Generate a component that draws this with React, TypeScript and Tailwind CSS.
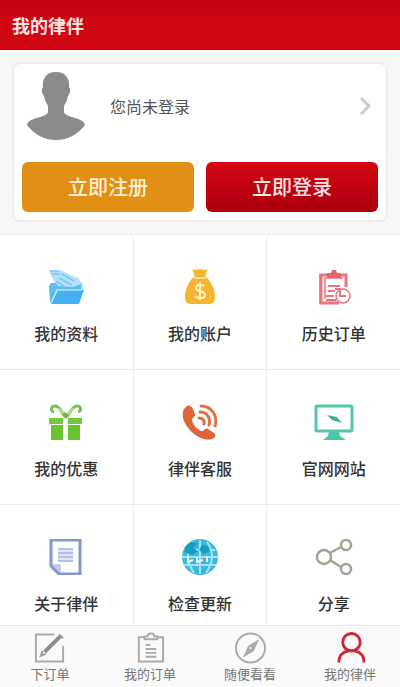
import { useState } from "react";
import type { ReactNode } from "react";

interface MenuItem {
  label: string;
  icon: ReactNode;
}

const menuItems: MenuItem[] = [
  {
    label: "我的资料",
    icon: (
      <svg viewBox="0 0 36 36" className="h-9 w-9" aria-hidden="true">
        <path d="M1 2 13 1l7 4 10 4 5 6v6H2V15l5-1z" fill="#b5e0fa" />
        <path d="M2 2h9M4 5h8M14 5l12 7M11 9l13 7M8 12l8 5" stroke="#79c5f3" strokeWidth="1.5" />
        <path d="M1 17l2-3h5l2 3 15 1 8-3v7H8L4 33H2z" fill="#5cbcf4" />
        <path d="M10 21h26l-5 14H3z" fill="#45b1f3" />
        <path d="M3 34 9 21h25" fill="none" stroke="#b9e4fc" strokeWidth="1.5" />
      </svg>
    ),
  },
  {
    label: "我的账户",
    icon: (
      <svg viewBox="0 0 36 36" className="h-9 w-9" aria-hidden="true">
        <path d="M10 0c3 2 5 0 8 0s5 2 8 0l-3 7c6 4 10 14 10 21 0 5-2 7-6 7H9c-4 0-6-2-6-7C3 21 7 11 13 7z" fill="#f6b52f" />
        <path d="M12 9h12" stroke="#fce1a5" strokeWidth="2" />
        <path d="M22 17c-2-2-8-2-8 2 0 5 9 2 9 7 0 4-7 4-10 1M18 13v18" fill="none" stroke="#fff1cc" strokeWidth="2" />
      </svg>
    ),
  },
  {
    label: "历史订单",
    icon: (
      <svg viewBox="0 0 36 36" className="h-9 w-9" fill="none" stroke="#e87580" aria-hidden="true">
        <path d="M30 18V6H5v28h18" strokeWidth="3" />
        <path d="M4 34V5M9 30V9h18" strokeWidth="1.5" />
        <path d="M11 4h4l1-3h4l1 3h4v5H11z" fill="#e46470" stroke="none" />
        <path d="M12 17h12M12 22h7M10 27h8M10 31h10" strokeWidth="2" />
        <circle cx="27" cy="27" r="7" fill="#fff" strokeWidth="1.5" />
        <path d="M19 20h5v7h6" strokeWidth="2" />
      </svg>
    ),
  },
  {
    label: "我的优惠",
    icon: (
      <svg viewBox="0 0 36 36" className="h-9 w-9" aria-hidden="true">
        <path d="M17 13C14 8 11 2 7 2c-4 0-5 5-1 6M19 13c3-5 6-11 10-11 4 0 5 5 1 6" fill="none" stroke="#7dbe50" strokeWidth="3" />
        <path d="M10 5c4 0 5 5 7 8M26 5c-4 0-5 5-7 8" fill="none" stroke="#b4e58b" strokeWidth="2" />
        <path d="M1 14h14v6H1zM20 14h14v6H20z" fill="#72c83c" />
        <path d="M3 21h12v15H3zM20 21h12v15H20z" fill="#68c52c" />
        <path d="m14 11 3-3 4 3-3 4z" fill="#78ad59" />
      </svg>
    ),
  },
  {
    label: "律伴客服",
    icon: (
      <svg viewBox="0 0 36 36" className="h-9 w-9" aria-hidden="true">
        <path d="M3 4c3-4 6-3 8 1l2 5c1 3-4 4-3 7 2 5 5 8 9 10 3 1 4-4 7-2l6 4c3 2 1 5-2 6C17 39-2 20 1 8c0-2 1-3 2-4z" fill="#de653b" />
        <path d="M17 14c4 0 6 3 5 6M18 8c7 0 11 6 9 13M19 2c11 0 17 10 14 20" fill="none" stroke="#e0703f" strokeWidth="3" strokeLinecap="round" />
      </svg>
    ),
  },
  {
    label: "官网网站",
    icon: (
      <svg viewBox="0 0 40 36" className="h-9 w-10" aria-hidden="true">
        <rect x="2" y="2" width="36" height="25" rx="1" fill="none" stroke="#55c6aa" strokeWidth="3" />
        <path d="M15 28h10l1 4 6 4H9l5-4z" fill="#4bc5a6" />
        <path d="m13 11 10 2 5 6-10-3z" fill="#45ae99" />
      </svg>
    ),
  },
  {
    label: "关于律伴",
    icon: (
      <svg viewBox="0 0 36 36" className="h-9 w-9" aria-hidden="true">
        <path d="M3 1h29v34H11l-8-8z" fill="#fff" stroke="#8296cf" strokeWidth="3" strokeLinejoin="round" />
        <path d="M4 26h8v8z" fill="#c2cdf0" stroke="#a0b0df" />
        <path d="M10 9h15v14H10z" fill="#dfe4f7" />
        <path d="M10 10h15M10 14h15M10 18h15M10 22h15" stroke="#b3bee2" strokeWidth="2" />
      </svg>
    ),
  },
  {
    label: "检查更新",
    icon: (
      <svg viewBox="0 0 38 36" className="h-9 w-[38px]" aria-hidden="true">
        <circle cx="19" cy="18" r="18" fill="#39b9dc" />
        <path d="M3 11h31M1 18h36M3 26h32M19 1v34M12 3C5 13 6 24 13 34M26 3c7 10 6 21-1 31" fill="none" stroke="#a5e3f2" strokeWidth="2" />
        <path d="m4 8 6-5 7 1-5 5 5 3-6 4-8-3zM21 6l6 1 2 5-6 3-5-4z" fill="#189dbf" />
        <path d="M7 17v6l5-2M16 18v5l6-2M26 17v6" fill="none" stroke="#e7fafd" strokeWidth="2" />
      </svg>
    ),
  },
  {
    label: "分享",
    icon: (
      <svg viewBox="0 0 38 36" className="h-9 w-[38px]" fill="none" stroke="#aaa195" strokeWidth="2.5" aria-hidden="true">
        <circle cx="9" cy="18" r="7" />
        <circle cx="31" cy="6" r="5" />
        <circle cx="31" cy="30" r="5" />
        <path d="m15 14 11-6M15 21l11 7" />
      </svg>
    ),
  },
];

const tabs: MenuItem[] = [
  {
    label: "下订单",
    icon: (
      <>
        <path d="M21 2H2v28h28V14" strokeWidth="2" />
        <path d="M27 4 11 20" strokeWidth="4" stroke="#8c8c8c" />
        <path d="m9 19-2 5 5-2M26 2l4 4" strokeWidth="2" stroke="#999" />
      </>
    ),
  },
  {
    label: "我的订单",
    icon: (
      <>
        <path d="M11 5H5v25h25V5h-6" strokeWidth="2" />
        <path d="M11 7V4h3c0-4 7-4 7 0h3v3z" strokeWidth="2" />
        <path d="M12 13h5M12 17h11M12 21h11M12 25h11" strokeWidth="2" />
      </>
    ),
  },
  {
    label: "随便看看",
    icon: (
      <>
        <circle cx="17" cy="16" r="15" strokeWidth="2" />
        <path d="m25 8-5 11-10 6 5-11z" fill="#aaa" strokeWidth="1" />
        <circle cx="17" cy="16" r="1" fill="#fff" stroke="none" />
      </>
    ),
  },
  {
    label: "我的律伴",
    icon: (
      <>
        <circle cx="18" cy="10" r="9" strokeWidth="3" />
        <path d="M5 31c0-7 4-11 10-12h6c6 1 10 5 10 12" strokeWidth="3" />
      </>
    ),
  },
];

function AccountCard() {
  return (
    <section className="mx-3 rounded-lg border-2 border-[#eeeeee] bg-white px-2 pb-2">
      <a href="#login" className="flex h-[98px] items-start pt-2 pr-1">
        <svg viewBox="0 0 60 68" className="ml-1 h-[68px] w-[60px] shrink-0" fill="#8b8b8b" aria-hidden="true">
          <path d="M30 0c9 0 14 6 13 15 2 2 1 7-1 9-1 5-3 8-4 10v6c1 6 20 5 21 13C52 62 42 68 30 68S8 62 1 53c1-8 20-7 21-13v-6c-1-2-3-5-4-10-2-2-3-7-1-9C16 6 21 0 30 0z" />
        </svg>
        <span className="ml-6 flex h-[68px] flex-1 items-center text-base text-[#555555]">您尚未登录</span>
        <span className="flex h-[68px] items-center">
          <svg viewBox="0 0 16 20" className="h-5 w-4" fill="none" stroke="#cccccc" strokeWidth="3" aria-hidden="true">
            <path d="m3 2 8 8-8 8" />
          </svg>
        </span>
      </a>
      <div className="grid grid-cols-2 gap-3">
        <button type="button" className="h-[50px] rounded-md bg-[#e19015] text-xl font-medium text-[#fff0d6]">
          立即注册
        </button>
        <button
          type="button"
          className="h-[50px] rounded-md bg-linear-to-b from-[#d80714] to-[#a9000d] text-xl font-medium text-[#ffe2e2]"
        >
          立即登录
        </button>
      </div>
    </section>
  );
}

function App() {
  const [activeTab, setActiveTab] = useState("我的律伴");

  return (
    <div className="flex h-screen flex-col bg-white font-['Noto_Sans_CJK_SC',sans-serif]">
      <header className="flex h-[50px] shrink-0 items-center bg-linear-to-b from-[#c2020f] via-[#d00814] to-[#d00412] px-3">
        <h1 className="text-lg font-bold text-[#ffe4e4]">我的律伴</h1>
      </header>

      <main className="min-h-0 flex-1 overflow-y-auto [scrollbar-width:none]">
        <div className="border-b border-[#eeeeee] bg-[#f7f7f7] py-3">
          <AccountCard />
        </div>
        <div className="grid grid-cols-3 gap-px bg-[#ececec]">
          {menuItems.map((item) => (
            <button
              key={item.label}
              type="button"
              className="flex h-[134px] flex-col items-center gap-4 bg-white pt-[34px] text-base font-medium text-[#333333]"
            >
              {item.icon}
              {item.label}
            </button>
          ))}
        </div>
      </main>

      <nav className="grid h-[62px] shrink-0 grid-cols-4 border-t border-[#e8e8e8] bg-[#fafafa]">
        {tabs.map((tab) => (
          <button
            key={tab.label}
            type="button"
            onClick={() => setActiveTab(tab.label)}
            className="flex flex-col items-center pt-1.5 text-[13px] leading-5 text-[#777777]"
          >
            <svg
              viewBox="0 0 33 32"
              className={`h-8 w-8 ${activeTab === tab.label ? "stroke-[#cb2938]" : "stroke-[#aaaaaa]"}`}
              fill="none"
              aria-hidden="true"
            >
              {tab.icon}
            </svg>
            {tab.label}
          </button>
        ))}
      </nav>
    </div>
  );
}

export default App;
